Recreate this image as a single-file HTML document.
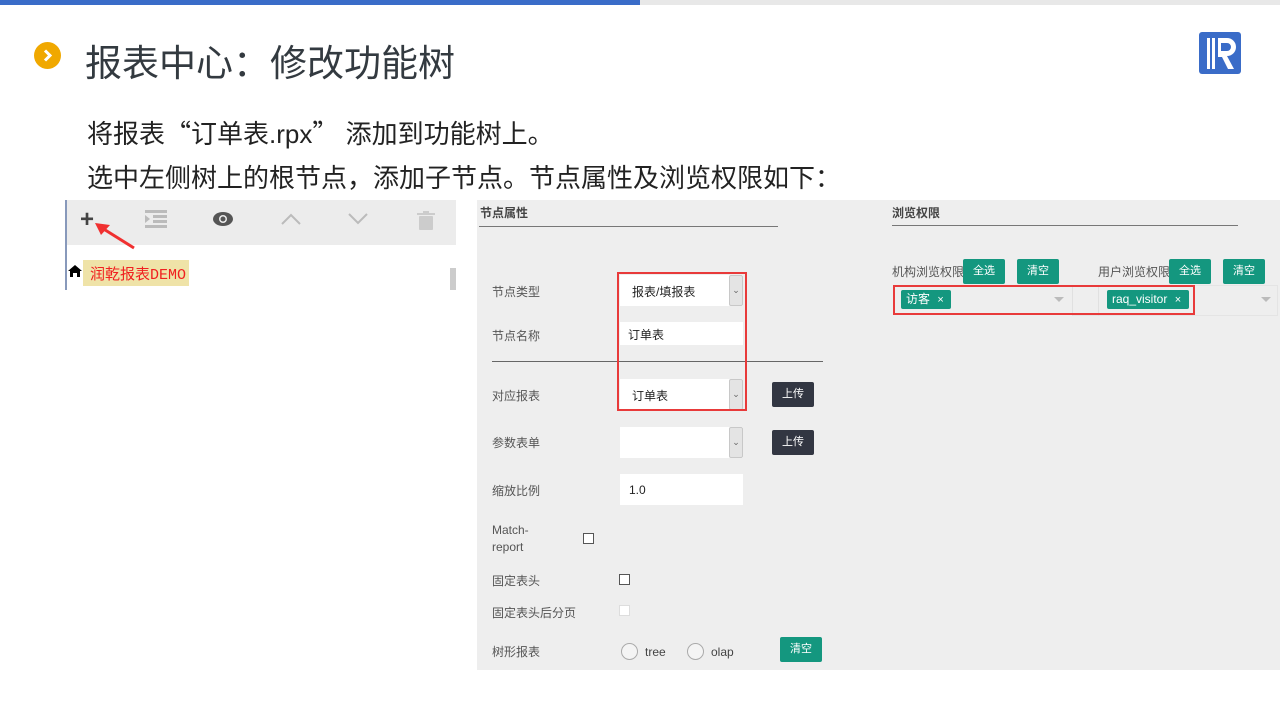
<!DOCTYPE html>
<html><head><meta charset="utf-8"><style>
*{margin:0;padding:0;box-sizing:border-box}
body{width:1280px;height:720px;position:relative;background:#fff;font-family:"Liberation Sans","Noto Sans CJK SC",sans-serif;overflow:hidden}
.a{position:absolute}
.cjk{font-family:"Noto Sans CJK SC",sans-serif}
.lbl{position:absolute;font-size:12px;color:#555}
.inp{position:absolute;background:#fff}
.sel{position:absolute;background:#fff}
.sel .arr{position:absolute;right:0;top:0;bottom:0;width:14px;background:#e4e4e4;border:1px solid #c8c8c8;border-radius:2px;font-size:9px;color:#666;text-align:center}
.btn{position:absolute;color:#fff;font-size:11px;text-align:center;border-radius:2px}
.cb{position:absolute;width:11px;height:11px;border:1px solid #555;background:#fff}
</style></head><body>
<div class="a" style="left:0;top:0;width:640px;height:5px;background:#3a6cc8"></div>
<div class="a" style="left:640px;top:0;width:640px;height:5px;background:#e8e8e8"></div>
<div class="a" style="left:34px;top:42px;width:27px;height:27px;border-radius:50%;background:#f0a800"></div>
<svg class="a" style="left:34px;top:42px" width="27" height="27"><path d="M11 8.5 L16 13.5 L11 18.5" stroke="#fff" stroke-width="3" fill="none"/></svg>
<div class="a" style="left:85px;top:33px;font-size:37px;color:#333a40">报表中心<span class="cjk">：</span>修改功能树</div>
<svg class="a" style="left:1199px;top:32px" width="42" height="42" viewBox="0 0 42 42"><rect x="0" y="0" width="42" height="42" rx="3" fill="#3a6cc8"/><rect x="8" y="6" width="3" height="31" fill="#fff"/><rect x="13" y="6" width="3" height="31" fill="#fff"/><path d="M19 6 H28 A9 9 0 0 1 28 24 L35 37 H29 L23 25 H19 Z M22 11 V19 H28 A4 4 0 0 0 28 11 Z" fill="#fff" fill-rule="evenodd"/></svg>
<div class="a" style="left:87px;top:114px;font-size:26px;color:#222;white-space:nowrap">将报表<span class="cjk">“</span>订单表.rpx<span class="cjk">”</span> 添加到功能树上。</div>
<div class="a" style="left:87px;top:158px;font-size:26px;color:#222;white-space:nowrap">选中左侧树上的根节点<span class="cjk">，</span>添加子节点。节点属性及浏览权限如下<span class="cjk">：</span></div>

<!-- left tree -->
<div class="a" style="left:66px;top:200px;width:390px;height:45px;background:#ececec"></div>
<div class="a" style="left:65px;top:200px;width:2px;height:90px;background:#8899bb"></div>
<div class="a" style="left:450px;top:268px;width:6px;height:22px;background:#ccc"></div>
<div class="a" style="left:80px;top:206px;font-size:24px;color:#444;font-weight:bold">+</div>
<svg class="a" style="left:90px;top:218px" width="50" height="35"><path d="M44 30 L12 10" stroke="#f03030" stroke-width="3"/><path d="M5 5 L20 7 L11 17Z" fill="#f03030"/></svg>
<svg class="a" style="left:145px;top:210px" width="22" height="18"><g fill="#bbb"><rect x="0" y="0" width="22" height="3"/><rect x="8" y="5" width="14" height="3"/><rect x="8" y="10" width="14" height="3"/><rect x="0" y="15" width="22" height="3"/><path d="M0 5 L5 9 L0 13Z"/></g></svg>
<svg class="a" style="left:212px;top:211px" width="22" height="16"><ellipse cx="11" cy="8" rx="10" ry="7" fill="#555"/><circle cx="11" cy="8" r="4" fill="#ececec"/><circle cx="11" cy="8" r="2.5" fill="#555"/></svg>
<svg class="a" style="left:280px;top:212px" width="22" height="14"><path d="M2 12 L11 3 L20 12" stroke="#bbb" stroke-width="2" fill="none"/></svg>
<svg class="a" style="left:347px;top:212px" width="22" height="14"><path d="M2 2 L11 11 L20 2" stroke="#bbb" stroke-width="2" fill="none"/></svg>
<svg class="a" style="left:417px;top:211px" width="18" height="19"><g fill="#ccc"><rect x="0" y="2" width="18" height="2"/><rect x="6" y="0" width="6" height="2"/><rect x="2" y="5" width="14" height="14" rx="1"/></g></svg>
<svg class="a" style="left:68px;top:265px" width="14" height="12"><path d="M7 0 L14 6 H12 V12 H9 V8 H5 V12 H2 V6 H0Z" fill="#000"/></svg>
<div class="a" style="left:83px;top:260px;width:106px;height:26px;background:#efe3a8"></div>
<div class="a" style="left:90px;top:263px;font-size:15px;color:#f02020;font-family:'Liberation Mono','Noto Sans CJK SC',monospace">润乾报表DEMO</div>

<!-- right panel -->
<div class="a" style="left:477px;top:200px;width:803px;height:470px;background:#eeeeee"></div>
<div class="a" style="left:480px;top:204px;font-size:12px;font-weight:bold;color:#444">节点属性</div>
<div class="a" style="left:479px;top:226px;width:299px;height:1px;background:#777"></div>
<div class="a" style="left:892px;top:204px;font-size:12px;font-weight:bold;color:#444">浏览权限</div>
<div class="a" style="left:892px;top:225px;width:346px;height:1px;background:#777"></div>

<div class="lbl" style="left:492px;top:283px">节点类型</div>
<div class="sel" style="left:620px;top:275px;width:123px;height:31px"><span class="a" style="left:12px;top:8px;font-size:12px;color:#222">报表/填报表</span><div class="arr" style="line-height:29px">⌄</div></div>
<div class="lbl" style="left:492px;top:327px">节点名称</div>
<div class="inp" style="left:620px;top:322px;width:123px;height:23px"><span class="a" style="left:8px;top:4px;font-size:12px;color:#222">订单表</span></div>
<div class="a" style="left:492px;top:361px;width:331px;height:1px;background:#666"></div>
<div class="lbl" style="left:492px;top:387px">对应报表</div>
<div class="sel" style="left:620px;top:379px;width:123px;height:31px"><span class="a" style="left:12px;top:8px;font-size:12px;color:#222">订单表</span><div class="arr" style="line-height:29px">⌄</div></div>
<div class="a" style="left:617px;top:272px;width:130px;height:139px;border:2px solid #e83a3a"></div>
<div class="btn" style="left:772px;top:382px;width:42px;height:25px;line-height:25px;background:#323642">上传</div>

<div class="lbl" style="left:492px;top:434px">参数表单</div>
<div class="sel" style="left:620px;top:427px;width:123px;height:31px"><div class="arr" style="line-height:29px">⌄</div></div>
<div class="btn" style="left:772px;top:430px;width:42px;height:25px;line-height:25px;background:#323642">上传</div>
<div class="lbl" style="left:492px;top:482px">缩放比例</div>
<div class="inp" style="left:620px;top:474px;width:123px;height:31px"><span class="a" style="left:9px;top:9px;font-size:12px;color:#222">1.0</span></div>
<div class="lbl" style="left:492px;top:522px;line-height:17px">Match-<br>report</div>
<div class="cb" style="left:583px;top:533px"></div>
<div class="lbl" style="left:492px;top:572px">固定表头</div>
<div class="cb" style="left:619px;top:574px"></div>
<div class="lbl" style="left:492px;top:604px">固定表头后分页</div>
<div class="cb" style="left:619px;top:605px;border-color:#ddd"></div>
<div class="lbl" style="left:492px;top:643px">树形报表</div>
<div class="a" style="left:621px;top:643px;width:17px;height:17px;border-radius:50%;border:1px solid #aaa;background:#f4f4f4"></div>
<div class="lbl" style="left:645px;top:645px;color:#444">tree</div>
<div class="a" style="left:687px;top:643px;width:17px;height:17px;border-radius:50%;border:1px solid #aaa;background:#f4f4f4"></div>
<div class="lbl" style="left:711px;top:645px;color:#444">olap</div>
<div class="btn" style="left:780px;top:637px;width:42px;height:25px;line-height:25px;background:#14977f">清空</div>

<div class="lbl" style="left:892px;top:263px">机构浏览权限</div>
<div class="btn" style="left:963px;top:259px;width:42px;height:25px;line-height:25px;background:#14977f">全选</div>
<div class="btn" style="left:1017px;top:259px;width:42px;height:25px;line-height:25px;background:#14977f">清空</div>
<div class="lbl" style="left:1098px;top:263px">用户浏览权限</div>
<div class="btn" style="left:1169px;top:259px;width:42px;height:25px;line-height:25px;background:#14977f">全选</div>
<div class="btn" style="left:1223px;top:259px;width:42px;height:25px;line-height:25px;background:#14977f">清空</div>
<div class="a" style="left:1072px;top:285px;width:206px;height:31px;border:1px solid #e4e4e4"></div>
<div class="a" style="left:1072px;top:285px;width:1px;height:31px;background:#e0e0e0"></div>
<div class="a" style="left:1098px;top:285px;width:1px;height:31px;background:#e0e0e0"></div>
<div class="a" style="left:893px;top:285px;width:302px;height:30px;border:2px solid #e83a3a"></div>
<div class="btn" style="left:901px;top:290px;width:50px;height:19px;line-height:19px;font-size:12px;text-align:left;padding-left:5px;background:#14977f">访客 <span style="margin-left:4px;font-size:11px">×</span></div>
<div class="a" style="left:1054px;top:297px;width:0;height:0;border-left:5px solid transparent;border-right:5px solid transparent;border-top:5px solid #bbb"></div>
<div class="btn" style="left:1107px;top:290px;width:82px;height:19px;line-height:19px;font-size:12px;text-align:left;padding-left:5px;background:#14977f">raq_visitor <span style="margin-left:4px;font-size:11px">×</span></div>
<div class="a" style="left:1261px;top:297px;width:0;height:0;border-left:5px solid transparent;border-right:5px solid transparent;border-top:5px solid #bbb"></div>
</body></html>
